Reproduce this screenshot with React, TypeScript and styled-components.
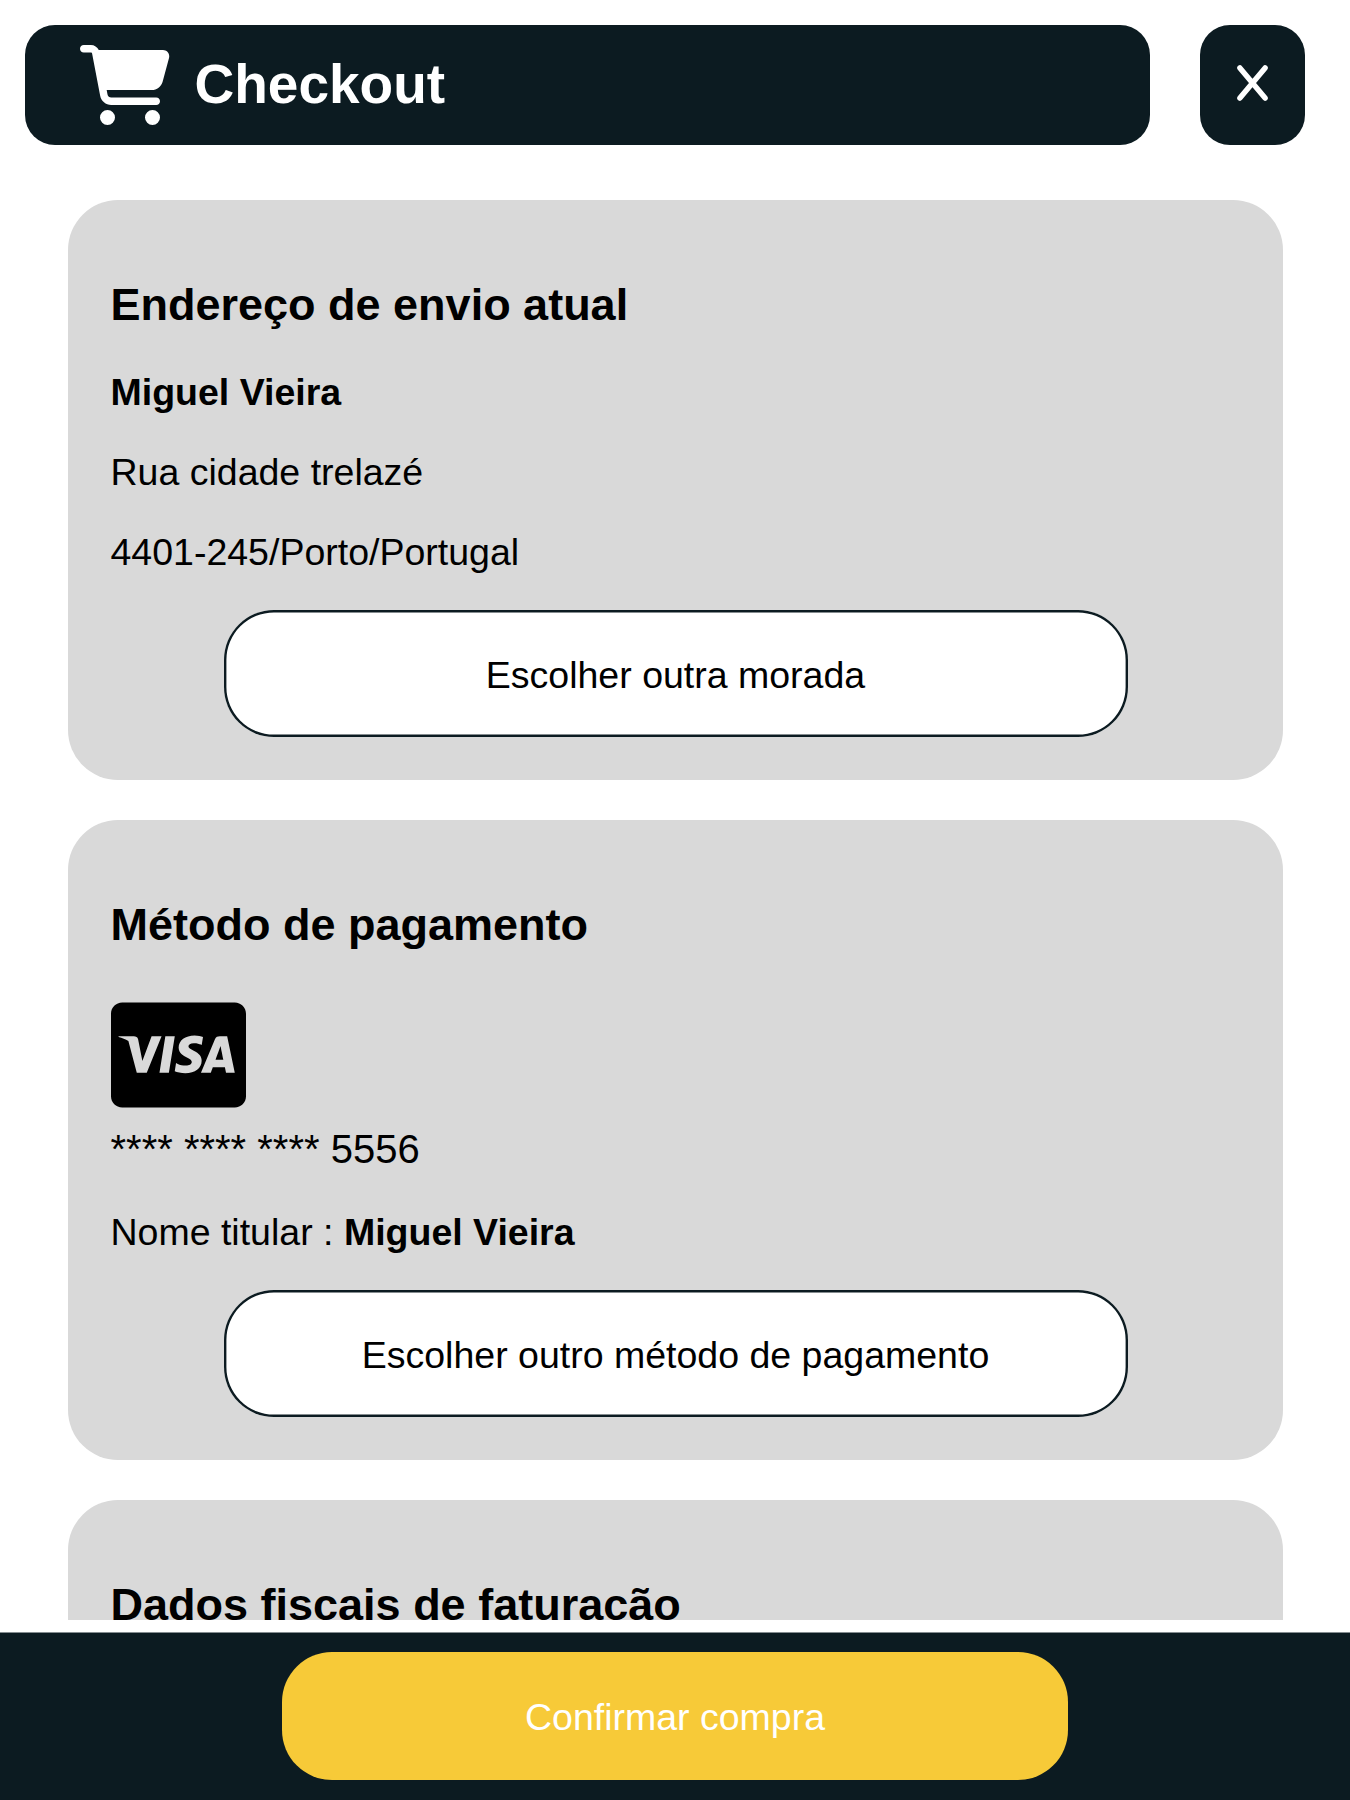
import React from "react";
import styled, { createGlobalStyle } from "styled-components";
import { FaCartShopping, FaCcVisa } from "react-icons/fa6";

const GlobalStyle = createGlobalStyle`
  * { box-sizing: border-box; }
  body {
    margin: 0;
    background: #fff;
    color: #000;
    font-family: Arial, "Liberation Sans", sans-serif;
  }
`;

const Page = styled.div`
  display: flex;
  flex-direction: column;
  height: 1800px;
  overflow: hidden;
`;

const Header = styled.header`
  display: flex;
  gap: 50px;
  height: 145px;
  padding: 25px 45px 0 25px;
`;

const TitleBar = styled.div`
  flex: 1;
  display: flex;
  align-items: center;
  gap: 25px;
  padding-left: 54.5px;
  border-radius: 30px;
  background: #0c1b21;
  color: #fff;
`;

const CartIcon = styled(FaCartShopping)`
  width: 90px;
  height: 80px;
`;

const Title = styled.h1`
  margin: 0;
  padding-bottom: 3px;
  font-size: 55px;
  line-height: 62px;
`;

const CloseButton = styled.button`
  display: flex;
  align-items: center;
  justify-content: center;
  width: 105px;
  padding: 0 0 4px;
  border: 0;
  border-radius: 30px;
  background: #0c1b21;
`;

const Content = styled.main`
  display: flex;
  flex-direction: column;
  align-items: center;
  gap: 40px;
  height: 1420px;
  margin: 55px 0 12px;
  overflow: hidden;
`;

const Card = styled.section`
  flex: none;
  display: flex;
  flex-direction: column;
  width: 90%;
  min-height: 580px;
  padding: 80px 42px 43px 43px;
  border-radius: 50px;
  background: #d9d9d9;
`;

const CardTitle = styled.h2`
  margin: 0 0 22px;
  font-size: 45px;
  line-height: 50px;
`;

const Line = styled.p`
  margin: 0;
  font-size: 37.5px;
  line-height: 80px;
`;

const VisaIcon = styled(FaCcVisa)`
  width: 135px;
  height: 120px;
  margin-top: 23px;
`;

const CardNumber = styled.p`
  margin: 12px 0 21px;
  font-size: 40px;
  line-height: 44px;
`;

const Button = styled.button`
  width: 80%;
  height: 127px;
  margin: 18px auto 0;
  padding: 3px 0 0;
  border: 0;
  border-radius: 50px;
  background: #fff;
  box-shadow: inset 0 0 0 2.4px #0c1b21;
  color: #000;
  font-family: inherit;
  font-size: 37.5px;
`;

const ConfirmButton = styled(Button)`
  width: 786px;
  height: 128px;
  margin: 0;
  background: #f7ca38;
  box-shadow: none;
  color: #fff;
`;

const Footer = styled.footer`
  flex: none;
  display: flex;
  justify-content: center;
  align-items: flex-start;
  height: 168px;
  padding-top: 19px;
  border-top: 1px solid #858d90;
  background: #0c1b21;
`;

export default function App() {
  return (
    <>
      <GlobalStyle />
      <Page>
        <Header>
          <TitleBar>
            <CartIcon />
            <Title>Checkout</Title>
          </TitleBar>
          <CloseButton aria-label="Fechar">
            <svg width="31" height="36" viewBox="0 0 31 36" fill="none" stroke="#fff" strokeWidth="5.4" strokeLinecap="round">
              <path d="M2.9 2.9 28.1 33.1M28.1 2.9 2.9 33.1" />
            </svg>
          </CloseButton>
        </Header>
        <Content>
          <Card>
            <CardTitle>Endereço de envio atual</CardTitle>
            <Line><b>Miguel Vieira</b></Line>
            <Line>Rua cidade trelazé</Line>
            <Line>4401-245/Porto/Portugal</Line>
            <Button>Escolher outra morada</Button>
          </Card>
          <Card>
            <CardTitle>Método de pagamento</CardTitle>
            <VisaIcon />
            <CardNumber>**** **** **** 5556</CardNumber>
            <Line>Nome titular : <b>Miguel Vieira</b></Line>
            <Button>Escolher outro método de pagamento</Button>
          </Card>
          <Card>
            <CardTitle>Dados fiscais de faturação</CardTitle>
          </Card>
        </Content>
        <Footer>
          <ConfirmButton>Confirmar compra</ConfirmButton>
        </Footer>
      </Page>
    </>
  );
}
